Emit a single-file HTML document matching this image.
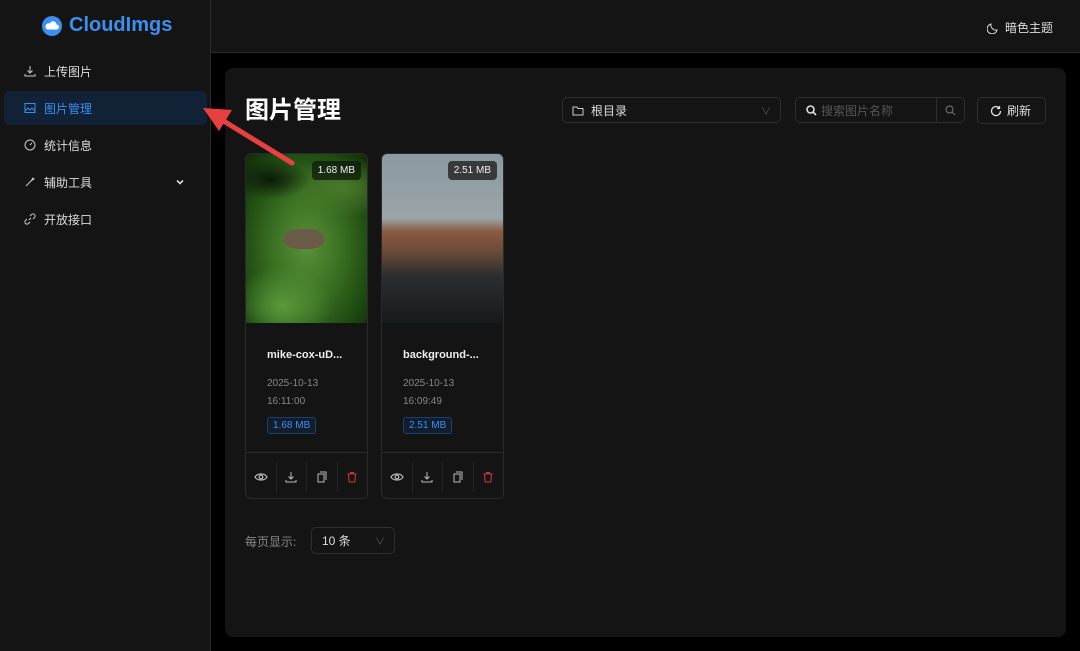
<!DOCTYPE html>
<html><head><meta charset="utf-8"><style>
*{box-sizing:border-box;margin:0;padding:0}
body{width:1080px;height:651px;background:#000;font-family:"Liberation Sans","Noto Sans CJK SC",sans-serif;color:#e6e6e6;position:relative;overflow:hidden}
.side{position:absolute;left:0;top:0;width:211px;height:651px;background:#141414;border-right:1px solid #2a2a2a}
.logo{position:absolute;left:42px;top:14px;display:flex;align-items:center;gap:7px;color:#3a8ff0;font-size:20px;font-weight:bold}
.item{position:absolute;left:4px;width:203px;height:34px;display:flex;align-items:center;padding-left:20px;font-size:12px;color:#ddd;border-radius:6px}
.item svg{margin-right:8px}
.item.act{background:#112236;color:#3a8ff0}
.top{position:absolute;left:211px;top:0;right:0;height:53px;background:#141414;border-bottom:1px solid #2a2a2a}
.theme{position:absolute;right:27px;top:19px;font-size:12px;color:#ddd;display:flex;align-items:center;gap:6px}
.main{position:absolute;left:225px;top:68px;width:841px;height:569px;background:#141414;border-radius:8px}
h1{position:absolute;left:245px;top:90px;font-size:24px;font-weight:bold;color:#fff}
.box{position:absolute;border:1px solid #2e2e2e;border-radius:5px;height:26px;top:97px;font-size:12px;display:flex;align-items:center}
.card{position:absolute;top:153px;width:123px;height:346px;border:1px solid #2a2a2a;border-radius:6px;overflow:hidden;background:#141414}
.img{height:169px;position:relative}
.badge{position:absolute;right:6px;top:7px;background:rgba(40,40,40,.85);color:#eee;font-size:10px;padding:4px 6px;border-radius:4px}
.name{position:absolute;left:21px;top:195px;font-size:11px;font-weight:bold;color:#eee}
.date{position:absolute;left:21px;top:221px;font-size:10px;color:#888;line-height:18px}
.tag{position:absolute;left:21px;top:263px;font-size:10px;color:#3a8ff0;border:1px solid #1d3f6b;background:#111d2c;border-radius:3px;padding:2px 5px}
.acts{position:absolute;left:0;right:0;top:298px;height:48px;border-top:1px solid #2a2a2a;display:flex;align-items:center}
.acts div{flex:1;height:30px;display:flex;align-items:center;justify-content:center;border-left:1px solid #252525}
.acts div:first-child{border-left:none}
</style></head><body>
<div class="side">
<div class="logo"><svg width="20" height="20" viewBox="0 0 20 20"><circle cx="10" cy="10" r="10" fill="#3a8ff0"/><path d="M5.5 13.5h9a2.5 2.5 0 0 0 0-5 3.5 3.5 0 0 0-6.7-1A2.8 2.8 0 0 0 5.5 13.5z" fill="#fff"/></svg><span style="font-weight:600">CloudImgs</span></div>
<div class="item" style="top:54px"><svg width="12" height="12" viewBox="0 0 12 12" fill="none" stroke="#ccc"><path d="M6 1v7M3.5 5.5 6 8l2.5-2.5M1 9v2h10V9"/></svg>上传图片</div>
<div class="item act" style="top:91px"><svg width="12" height="12" viewBox="0 0 12 12" fill="none" stroke="#3a8ff0"><rect x="1" y="1.5" width="10" height="9"/><path d="M1 9l3-3 2 2 2-2 3 3"/></svg>图片管理</div>
<div class="item" style="top:128px"><svg width="12" height="12" viewBox="0 0 12 12" fill="none" stroke="#ccc"><circle cx="6" cy="6" r="5"/><path d="M6 6l2-2"/></svg>统计信息</div>
<div class="item" style="top:165px"><svg width="12" height="12" viewBox="0 0 12 12" fill="none" stroke="#ccc"><path d="M2 10l5-5M7 5l2-3 1 1-3 2"/></svg>辅助工具<svg style="position:absolute;right:14px" width="10" height="10" viewBox="0 0 10 10" fill="none" stroke="#ddd" stroke-width="1.6"><path d="M2 3.5l3 3 3-3"/></svg></div>
<div class="item" style="top:202px"><svg width="12" height="12" viewBox="0 0 12 12" fill="none" stroke="#ccc"><path d="M5 7l2-2M3 6 1.5 7.5a2 2 0 0 0 3 3L6 9M9 6l1.5-1.5a2 2 0 0 0-3-3L6 3"/></svg>开放接口</div>
</div>
<div class="top"><div class="theme"><svg width="12" height="12" viewBox="0 0 12 12" fill="none" stroke="#ddd"><path d="M10 8A5 5 0 0 1 4 2a5 5 0 1 0 6 6z"/></svg>暗色主题</div></div>
<div class="main"></div>
<h1>图片管理</h1>
<div class="box" style="left:562px;width:219px;padding-left:9px;color:#ddd"><svg width="12" height="11" viewBox="0 0 12 11" fill="none" stroke="#ccc" style="margin-right:7px"><path d="M1 2h4l1 1.5h5V10H1z"/></svg>根目录<span style="position:absolute;right:9px;color:#555;font-size:10px">&#x2228;</span></div>
<div class="box" style="left:795px;width:170px;color:#555;padding-left:10px"><svg width="11" height="11" viewBox="0 0 11 11" fill="none" stroke="#ddd" stroke-width="1.6"><circle cx="4.5" cy="4.5" r="3.5"/><path d="M7 7l3 3"/></svg><span style="margin-left:4px">搜索图片名称</span><span style="position:absolute;right:0;top:0;width:28px;height:24px;border-left:1px solid #2e2e2e;display:flex;align-items:center;justify-content:center"><svg width="11" height="11" viewBox="0 0 11 11" fill="none" stroke="#777"><circle cx="4.5" cy="4.5" r="3.5"/><path d="M7 7l3 3"/></svg></span></div>
<div class="box" style="left:977px;width:69px;padding-left:12px;color:#ddd;height:27px"><svg width="12" height="12" viewBox="0 0 12 12" fill="none" stroke="#ddd" stroke-width="1.3" style="margin-right:5px"><path d="M10.5 6A4.5 4.5 0 1 1 9 2.7M9.5 1v2.5H7"/></svg>刷新</div>

<div class="card" style="left:245px"><div class="img" style="background:radial-gradient(ellipse 40px 20px at 20% 15%,#0c1a08 0,transparent 100%),radial-gradient(ellipse 60px 30px at 80% 20%,#4a7a2a 0,transparent 100%),radial-gradient(ellipse 50px 40px at 30% 90%,#5a9a3a 0,transparent 100%),radial-gradient(ellipse at 50% 55%,#5a9038 0,#3a7022 40%,#1e4a12 75%,#102a08 100%)"><div style="position:absolute;left:38px;top:75px;width:40px;height:20px;background:#6a5a48;border-radius:40%"></div><span class="badge" style="background:rgba(10,20,8,.7)">1.68 MB</span></div>
<div class="name">mike-cox-uD...</div><div class="date">2025-10-13<br>16:11:00</div><div class="tag">1.68 MB</div>
<div class="acts"><div><svg width="14" height="10" viewBox="0 0 14 10" fill="none" stroke="#bbb" stroke-width="1.2"><path d="M1 5c2-4 10-4 12 0-2 4-10 4-12 0z"/><circle cx="7" cy="5" r="1.8"/></svg></div><div><svg width="12" height="12" viewBox="0 0 12 12" fill="none" stroke="#bbb"><path d="M6 1v7M3.5 5.5 6 8l2.5-2.5M1 9v2h10V9"/></svg></div><div><svg width="12" height="12" viewBox="0 0 12 12" fill="none" stroke="#bbb"><rect x="2" y="3" width="6" height="8"/><path d="M4 1h6v8"/></svg></div><div><svg width="12" height="12" viewBox="0 0 12 12" fill="none" stroke="#d9383a"><path d="M1.5 3h9M4.5 3V1.5h3V3M2.5 3l.7 8h5.6l.7-8"/></svg></div></div></div>

<div class="card" style="left:381px"><div class="img" style="background:linear-gradient(#8a9aa2 0,#9aa4a6 38%,#8a5a40 46%,#6a4a38 58%,#2a2e30 72%,#161a1c 100%)"><span class="badge">2.51 MB</span></div>
<div class="name">background-...</div><div class="date">2025-10-13<br>16:09:49</div><div class="tag">2.51 MB</div>
<div class="acts"><div><svg width="14" height="10" viewBox="0 0 14 10" fill="none" stroke="#bbb" stroke-width="1.2"><path d="M1 5c2-4 10-4 12 0-2 4-10 4-12 0z"/><circle cx="7" cy="5" r="1.8"/></svg></div><div><svg width="12" height="12" viewBox="0 0 12 12" fill="none" stroke="#bbb"><path d="M6 1v7M3.5 5.5 6 8l2.5-2.5M1 9v2h10V9"/></svg></div><div><svg width="12" height="12" viewBox="0 0 12 12" fill="none" stroke="#bbb"><rect x="2" y="3" width="6" height="8"/><path d="M4 1h6v8"/></svg></div><div><svg width="12" height="12" viewBox="0 0 12 12" fill="none" stroke="#d9383a"><path d="M1.5 3h9M4.5 3V1.5h3V3M2.5 3l.7 8h5.6l.7-8"/></svg></div></div></div>

<div style="position:absolute;left:245px;top:533px;font-size:12px;color:#888">每页显示:</div>
<div class="box" style="left:311px;top:527px;width:84px;height:27px;padding-left:10px;color:#ddd">10 条<span style="position:absolute;right:9px;color:#555;font-size:10px">&#x2228;</span></div>

<svg style="position:absolute;left:0;top:0" width="1080" height="651"><path d="M292 163 L222 120" stroke="#e84040" stroke-width="5" stroke-linecap="round"/><path d="M203 108 L232 110 L219 131z" fill="#e84040"/></svg>
</body></html>
